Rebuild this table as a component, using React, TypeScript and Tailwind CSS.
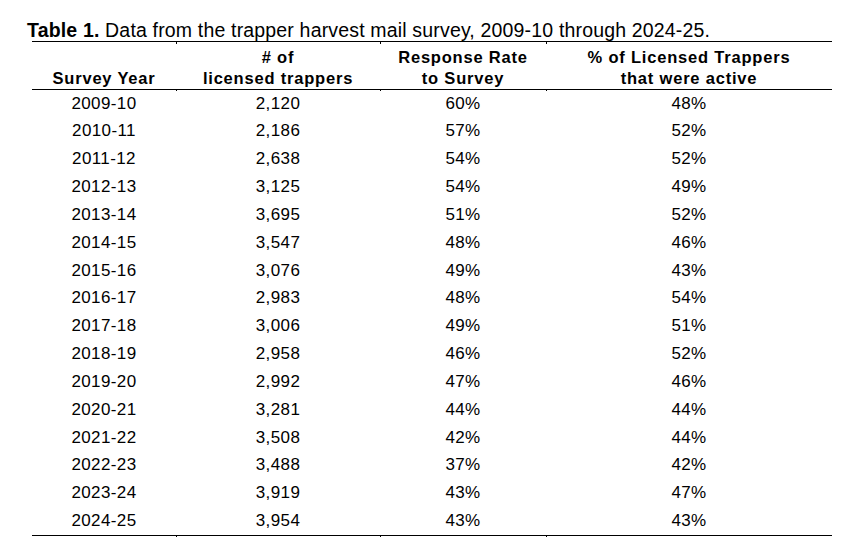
const rows: [string, string, string, string][] = [
  ['2009-10', '2,120', '60%', '48%'],
  ['2010-11', '2,186', '57%', '52%'],
  ['2011-12', '2,638', '54%', '52%'],
  ['2012-13', '3,125', '54%', '49%'],
  ['2013-14', '3,695', '51%', '52%'],
  ['2014-15', '3,547', '48%', '46%'],
  ['2015-16', '3,076', '49%', '43%'],
  ['2016-17', '2,983', '48%', '54%'],
  ['2017-18', '3,006', '49%', '51%'],
  ['2018-19', '2,958', '46%', '52%'],
  ['2019-20', '2,992', '47%', '46%'],
  ['2020-21', '3,281', '44%', '44%'],
  ['2021-22', '3,508', '42%', '44%'],
  ['2022-23', '3,488', '37%', '42%'],
  ['2023-24', '3,919', '43%', '47%'],
  ['2024-25', '3,954', '43%', '43%'],
];

const cols = 'grid grid-cols-[144px_204px_166px_286px]';

// horizontal rule with the little cell-border ticks under it
function Rule() {
  return (
    <div className={cols}>
      <div className="h-[2.5px] border-t-[1.5px] border-black" />
      <div className="h-[2.5px] border-t-[1.5px] border-l border-black" />
      <div className="h-[2.5px] border-t-[1.5px] border-l border-black" />
      <div className="h-[2.5px] border-t-[1.5px] border-l border-black" />
    </div>
  );
}

export default function App() {
  return (
    <div className="min-h-screen w-[859px] bg-white text-black font-['Liberation_Sans',Arial,sans-serif]">
      <div className="pl-[32px] pt-[19px]">
        <h1 className="-ml-[5px] text-[19.5px] leading-[22px] tracking-[0.17px] whitespace-nowrap">
          <span className="font-bold">Table 1.</span> Data from the trapper harvest mail survey, 2009-10 through 2024-25.
        </h1>
        <div className="w-[800px]">
          <Rule />
          <div className={`${cols} -mt-[1px] h-[46px] items-end text-center font-bold text-[16.5px] leading-[20.7px] tracking-[0.8px]`}>
            <div>Survey Year</div>
            <div>
              # of
              <br />
              licensed trappers
            </div>
            <div>
              Response Rate
              <br />
              to Survey
            </div>
            <div>
              % of Licensed Trappers
              <br />
              that were active
            </div>
          </div>
          <Rule />
          <div className="-mt-[1.5px]">
            {rows.map((r) => (
              <div key={r[0]} className={`${cols} h-[27.83px] items-center text-center text-[17px] tracking-[0.4px]`}>
                {r.map((c, i) => (
                  <div key={i}>{c}</div>
                ))}
              </div>
            ))}
          </div>
          <Rule />
        </div>
      </div>
    </div>
  );
}
